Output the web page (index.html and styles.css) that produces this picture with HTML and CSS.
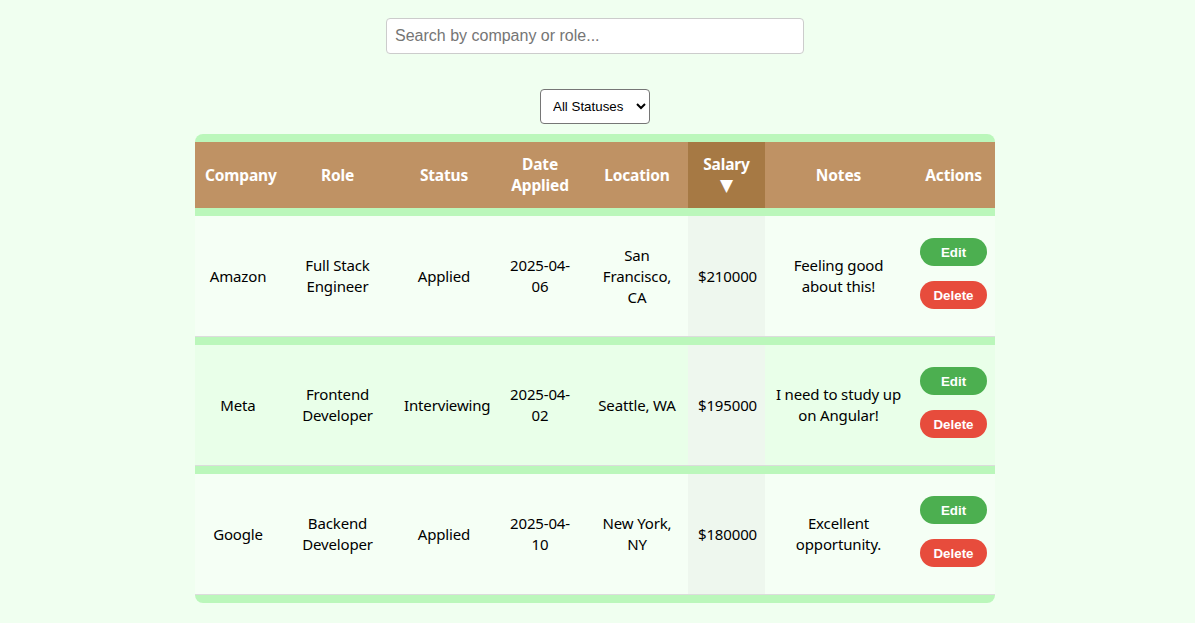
FILE: index.html
```html
<!DOCTYPE html>
<html lang="en">
<head>
<meta charset="utf-8">
<title>Job Applications</title>
<link rel="stylesheet" href="styles.css">
</head>
<body>
<div class="app">
  <input class="search" type="text" placeholder="Search by company or role...">
  <div class="filter">
    <select class="status-select">
      <option>All Statuses</option>
      <option>Applied</option>
      <option>Interviewing</option>
      <option>Offer</option>
      <option>Rejected</option>
    </select>
  </div>
  <table class="jobs">
    <colgroup>
      <col class="c-company"><col class="c-role"><col class="c-status"><col class="c-date"><col class="c-loc"><col class="c-salary"><col class="c-notes"><col class="c-actions">
    </colgroup>
    <thead>
      <tr>
        <th>Company</th>
        <th>Role</th>
        <th>Status</th>
        <th>Date Applied</th>
        <th>Location</th>
        <th class="sorted">Salary <span class="sort-arrow">▼</span></th>
        <th>Notes</th>
        <th>Actions</th>
      </tr>
    </thead>
    <tbody>
      <tr class="odd">
        <td>Amazon</td>
        <td>Full Stack Engineer</td>
        <td>Applied</td>
        <td>2025-04-06</td>
        <td>San Francisco, CA</td>
        <td class="sorted">$210000</td>
        <td>Feeling good about this!</td>
        <td><div class="actions"><button class="btn edit">Edit</button><button class="btn delete">Delete</button></div></td>
      </tr>
      <tr class="even">
        <td>Meta</td>
        <td>Frontend Developer</td>
        <td>Interviewing</td>
        <td>2025-04-02</td>
        <td>Seattle, WA</td>
        <td class="sorted">$195000</td>
        <td>I need to study up on Angular!</td>
        <td><div class="actions"><button class="btn edit">Edit</button><button class="btn delete">Delete</button></div></td>
      </tr>
      <tr class="odd">
        <td>Google</td>
        <td>Backend Developer</td>
        <td>Applied</td>
        <td>2025-04-10</td>
        <td>New York, NY</td>
        <td class="sorted">$180000</td>
        <td>Excellent opportunity.</td>
        <td><div class="actions"><button class="btn edit">Edit</button><button class="btn delete">Delete</button></div></td>
      </tr>
    </tbody>
  </table>
</div>
</body>
</html>
```
FILE: styles.css
```css
html, body {
  margin: 0;
  padding: 0;
  background: #f0fff0;
}
body {
  font-family: "Noto Sans", "Open Sans", sans-serif;
  font-size: 15px;
  letter-spacing: -0.15px;
  color: #111;
}
.app {
  display: flex;
  flex-direction: column;
  align-items: center;
  padding-top: 18px;
  padding-right: 5px;
}
.search {
  box-sizing: border-box;
  width: 418px;
  height: 36px;
  padding: 8px;
  font-family: "Liberation Sans", Arial, sans-serif;
  font-size: 16px;
  letter-spacing: 0;
  border: 1px solid #ccc;
  border-radius: 4px;
  background: #fff;
  outline: none;
}
.search::placeholder {
  color: #757575;
}
.filter {
  margin-top: 35px;
  margin-bottom: 10px;
}
.status-select {
  box-sizing: border-box;
  width: 110px;
  height: 35px;
  padding: 0 8px;
  font-family: "Liberation Sans", Arial, sans-serif;
  font-size: 13.33px;
  letter-spacing: 0;
  color: #000;
  background: #fff;
  border: 1px solid #767676;
  border-radius: 4px;
}
.jobs {
  width: 800px;
  table-layout: fixed;
  border-collapse: separate;
  border-spacing: 0 8px;
  background: #bbf7bb;
  border-radius: 8px;
}
.c-company { width: 86px; }
.c-role { width: 113px; }
.c-status { width: 100px; }
.c-date { width: 92px; }
.c-loc { width: 102px; }
.c-salary { width: 77px; }
.c-notes { width: 147px; }
.c-actions { width: 83px; }
.jobs th {
  background: #bf9264;
  color: #fff;
  font-weight: 700;
  font-size: 15.5px;
  line-height: 21px;
  padding: 12px 10px;
  text-align: center;
  vertical-align: middle;
}
.jobs th.sorted {
  background: #a67944;
}
.sort-arrow {
  font-family: "DejaVu Sans", sans-serif;
  font-size: 17px;
  line-height: 21px;
}
.jobs td {
  padding: 12px 10px;
  text-align: center;
  vertical-align: middle;
  line-height: 21px;
  color: #000;
  border-bottom: 1px solid #dcdcdc;
}
.jobs tr.odd td { background: #f5fff5; }
.jobs tr.even td { background: #e9ffe9; }
.jobs tr td.sorted { background: #eef7ee; }
.actions {
  display: flex;
  flex-direction: column;
  align-items: center;
  gap: 15px;
  padding: 10px 0 15px;
}
.btn {
  width: 67px;
  height: 28px;
  border: none;
  border-radius: 14px;
  color: #fff;
  font-family: "Liberation Sans", Arial, sans-serif;
  font-size: 13.33px;
  font-weight: 700;
  letter-spacing: 0;
  padding: 0;
  cursor: pointer;
}
.btn.edit { background: #4caf50; }
.btn.delete { background: #e74c3c; }
```
